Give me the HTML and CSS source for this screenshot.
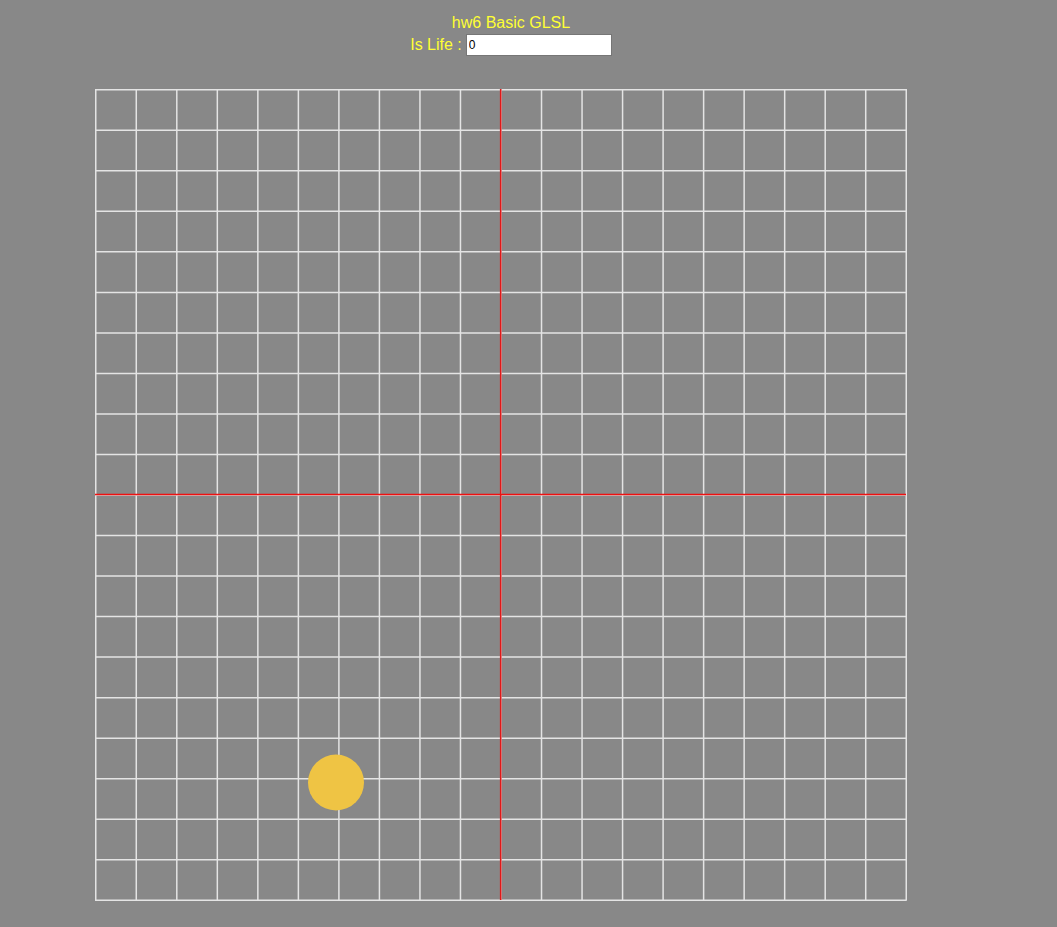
FILE: index.html
```html
<!DOCTYPE html>
<html>
<head>
<meta charset="utf-8">
<link rel="stylesheet" href="styles.css">
</head>
<body>
<div class="page">
  <header class="head">
    <div class="title">hw6 Basic GLSL</div>
    <div class="row"><label for="life">Is Life : </label><input id="life" class="life" type="text" value="0"></div>
  </header>
  <div class="stage">
    <svg class="grid" width="812" height="812" viewBox="0 0 812 812" xmlns="http://www.w3.org/2000/svg">
      <g id="lines" stroke="#e4e4e4" stroke-width="1.5"></g>
      <line x1="405.7" y1="0" x2="405.7" y2="811" stroke="#e01818" stroke-width="1.6"/>
      <line x1="0" y1="405.5" x2="811" y2="405.5" stroke="#f01010" stroke-width="1.6"/>
      <circle cx="241" cy="693.5" r="28" fill="#efc444"/>
    </svg>
  </div>
</div>
<script src="app.js"></script>
</body>
</html>
```
FILE: styles.css
```css
html, body {
  margin: 0;
  padding: 0;
  background: #888888;
}
body {
  margin: 8px;
  font-family: "Liberation Sans", Arial, sans-serif;
  color: #ffff33;
}
.page {
  width: 1006px;
}
.head {
  text-align: center;
  padding-top: 6px;
  font-size: 16px;
}
.title {
  line-height: 18px;
}
.row {
  margin-top: 2px;
  display: flex;
  justify-content: center;
  align-items: center;
  gap: 4px;
}
.life {
  width: 146px;
  height: 22px;
  box-sizing: border-box;
  border: 1px solid #767676;
  padding: 1px 2px;
  font-family: "Liberation Sans", Arial, sans-serif;
  font-size: 12px;
  color: #000;
  background: #fff;
}
.stage {
  margin-top: 33px;
  padding-left: 86.5px;
}
.grid {
  display: block;
}
```
FILE: app.js
```js
(function () {
  var g = document.getElementById('lines');
  var ns = 'http://www.w3.org/2000/svg';
  var step = 810.5 / 20;
  for (var i = 0; i <= 20; i++) {
    var p = 0.75 + i * step;
    var v = document.createElementNS(ns, 'line');
    v.setAttribute('x1', p); v.setAttribute('x2', p);
    v.setAttribute('y1', 0); v.setAttribute('y2', 811.5);
    g.appendChild(v);
    var h = document.createElementNS(ns, 'line');
    h.setAttribute('y1', p); h.setAttribute('y2', p);
    h.setAttribute('x1', 0); h.setAttribute('x2', 811.5);
    g.appendChild(h);
  }
})();
```
